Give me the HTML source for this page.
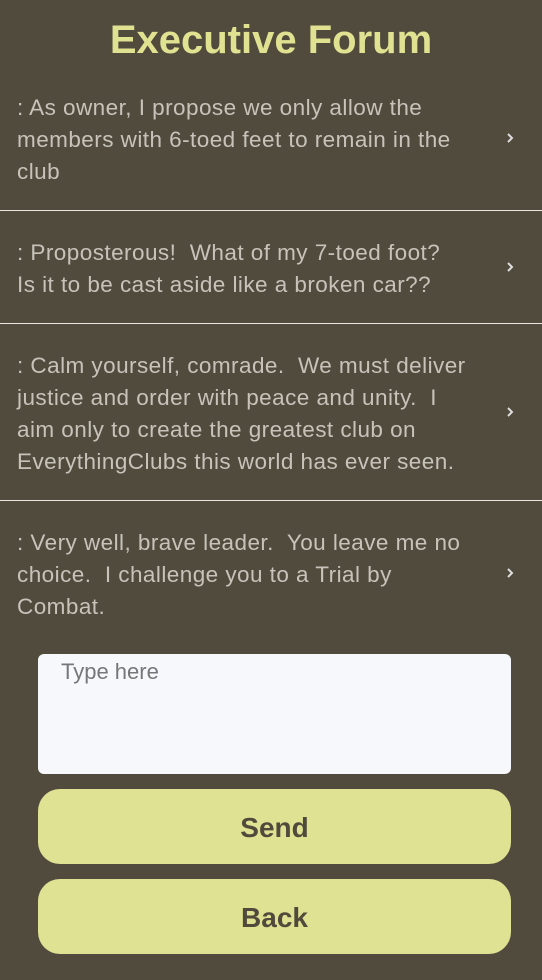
<!DOCTYPE html>
<html><head><meta charset="utf-8"><style>
html,body{margin:0;padding:0;width:542px;height:980px;background:#514b3d;overflow:hidden;font-family:"Liberation Sans","DejaVu Sans",sans-serif;}
h1{position:absolute;top:15px;left:0;width:542px;margin:0;text-align:center;color:#e0e291;font-size:40px;font-weight:bold;line-height:50px;}
.t{position:absolute;left:17px;color:#c7c3bb;font-size:22.5px;letter-spacing:0.45px;line-height:32px;white-space:nowrap;}
.ch{position:absolute;left:503px;width:14px;height:14px;}
.hr{position:absolute;left:0;width:542px;height:1px;background:#e8e6e0;}
.ta{position:absolute;left:38px;top:654px;width:473px;height:120px;background:#f7f8fb;border-radius:6px;}
.ta span{position:absolute;left:23px;top:2px;color:#777;font-size:22px;line-height:32px;}
.btn{position:absolute;left:38px;width:473px;height:75px;background:#dfe292;border-radius:22px;text-align:center;line-height:77px;font-size:28px;font-weight:bold;color:#4f4a3c;}
</style></head><body>
<h1>Executive Forum</h1>
<div class="t" style="top:92px">: As owner, I propose we only allow the<br>members with 6-toed feet to remain in the<br>club</div>
<svg class="ch" style="top:131px" viewBox="0 0 14 14"><path d="M5 3l4 4-4 4" stroke="#ddd" stroke-width="2" fill="none"/></svg>
<div class="hr" style="top:210px"></div>
<div class="t" style="top:237px">: Proposterous!&nbsp; What of my 7-toed foot?<br>Is it to be cast aside like a broken car??</div>
<svg class="ch" style="top:260px" viewBox="0 0 14 14"><path d="M5 3l4 4-4 4" stroke="#ddd" stroke-width="2" fill="none"/></svg>
<div class="hr" style="top:323px"></div>
<div class="t" style="top:350px">: Calm yourself, comrade.&nbsp; We must deliver<br>justice and order with peace and unity.&nbsp; I<br>aim only to create the greatest club on<br>EverythingClubs this world has ever seen.</div>
<svg class="ch" style="top:405px" viewBox="0 0 14 14"><path d="M5 3l4 4-4 4" stroke="#ddd" stroke-width="2" fill="none"/></svg>
<div class="hr" style="top:500px"></div>
<div class="t" style="top:527px">: Very well, brave leader.&nbsp; You leave me no<br>choice.&nbsp; I challenge you to a Trial by<br>Combat.</div>
<svg class="ch" style="top:566px" viewBox="0 0 14 14"><path d="M5 3l4 4-4 4" stroke="#ddd" stroke-width="2" fill="none"/></svg>
<div class="ta"><span>Type here</span></div>
<div class="btn" style="top:789px">Send</div>
<div class="btn" style="top:879px">Back</div>
</body></html>
